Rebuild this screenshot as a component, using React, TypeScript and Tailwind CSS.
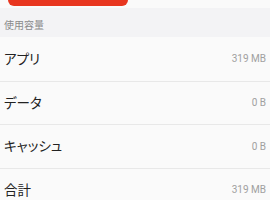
const rows = [
  { label: "アプリ", value: "319 MB" },
  { label: "データ", value: "0 B" },
  { label: "キャッシュ", value: "0 B" },
  { label: "合計", value: "319 MB" },
];

export default function App() {
  return (
    <div
      className="w-[270px] h-[200px] overflow-hidden bg-[#f3f3f5]"
      style={{ fontFamily: '"Roboto", "Noto Sans CJK JP", sans-serif' }}
    >
      <div className="h-[8px] bg-[#fafafa] px-[8px]">
        <div className="w-[120px] h-[6px] bg-[#e8361f] rounded-b-[8px]" />
      </div>
      <div className="h-[29px] flex items-center px-[4px] pt-[6px] text-[10px] text-[#8a8a8a]">
        使用容量
      </div>
      <div className="bg-[#fafafa]">
        {rows.map((r, i) => (
          <div
            key={r.label}
            className={
              "h-[43.5px] flex items-center justify-between pl-[4px] pr-[4px] " +
              (i > 0 ? "border-t border-[#e8e8e8]" : "")
            }
          >
            <span className="text-[13.5px] text-[#222] [font-feature-settings:'palt']">{r.label}</span>
            <span className="text-[10px] text-[#a0a0a0]">{r.value}</span>
          </div>
        ))}
      </div>
    </div>
  );
}
